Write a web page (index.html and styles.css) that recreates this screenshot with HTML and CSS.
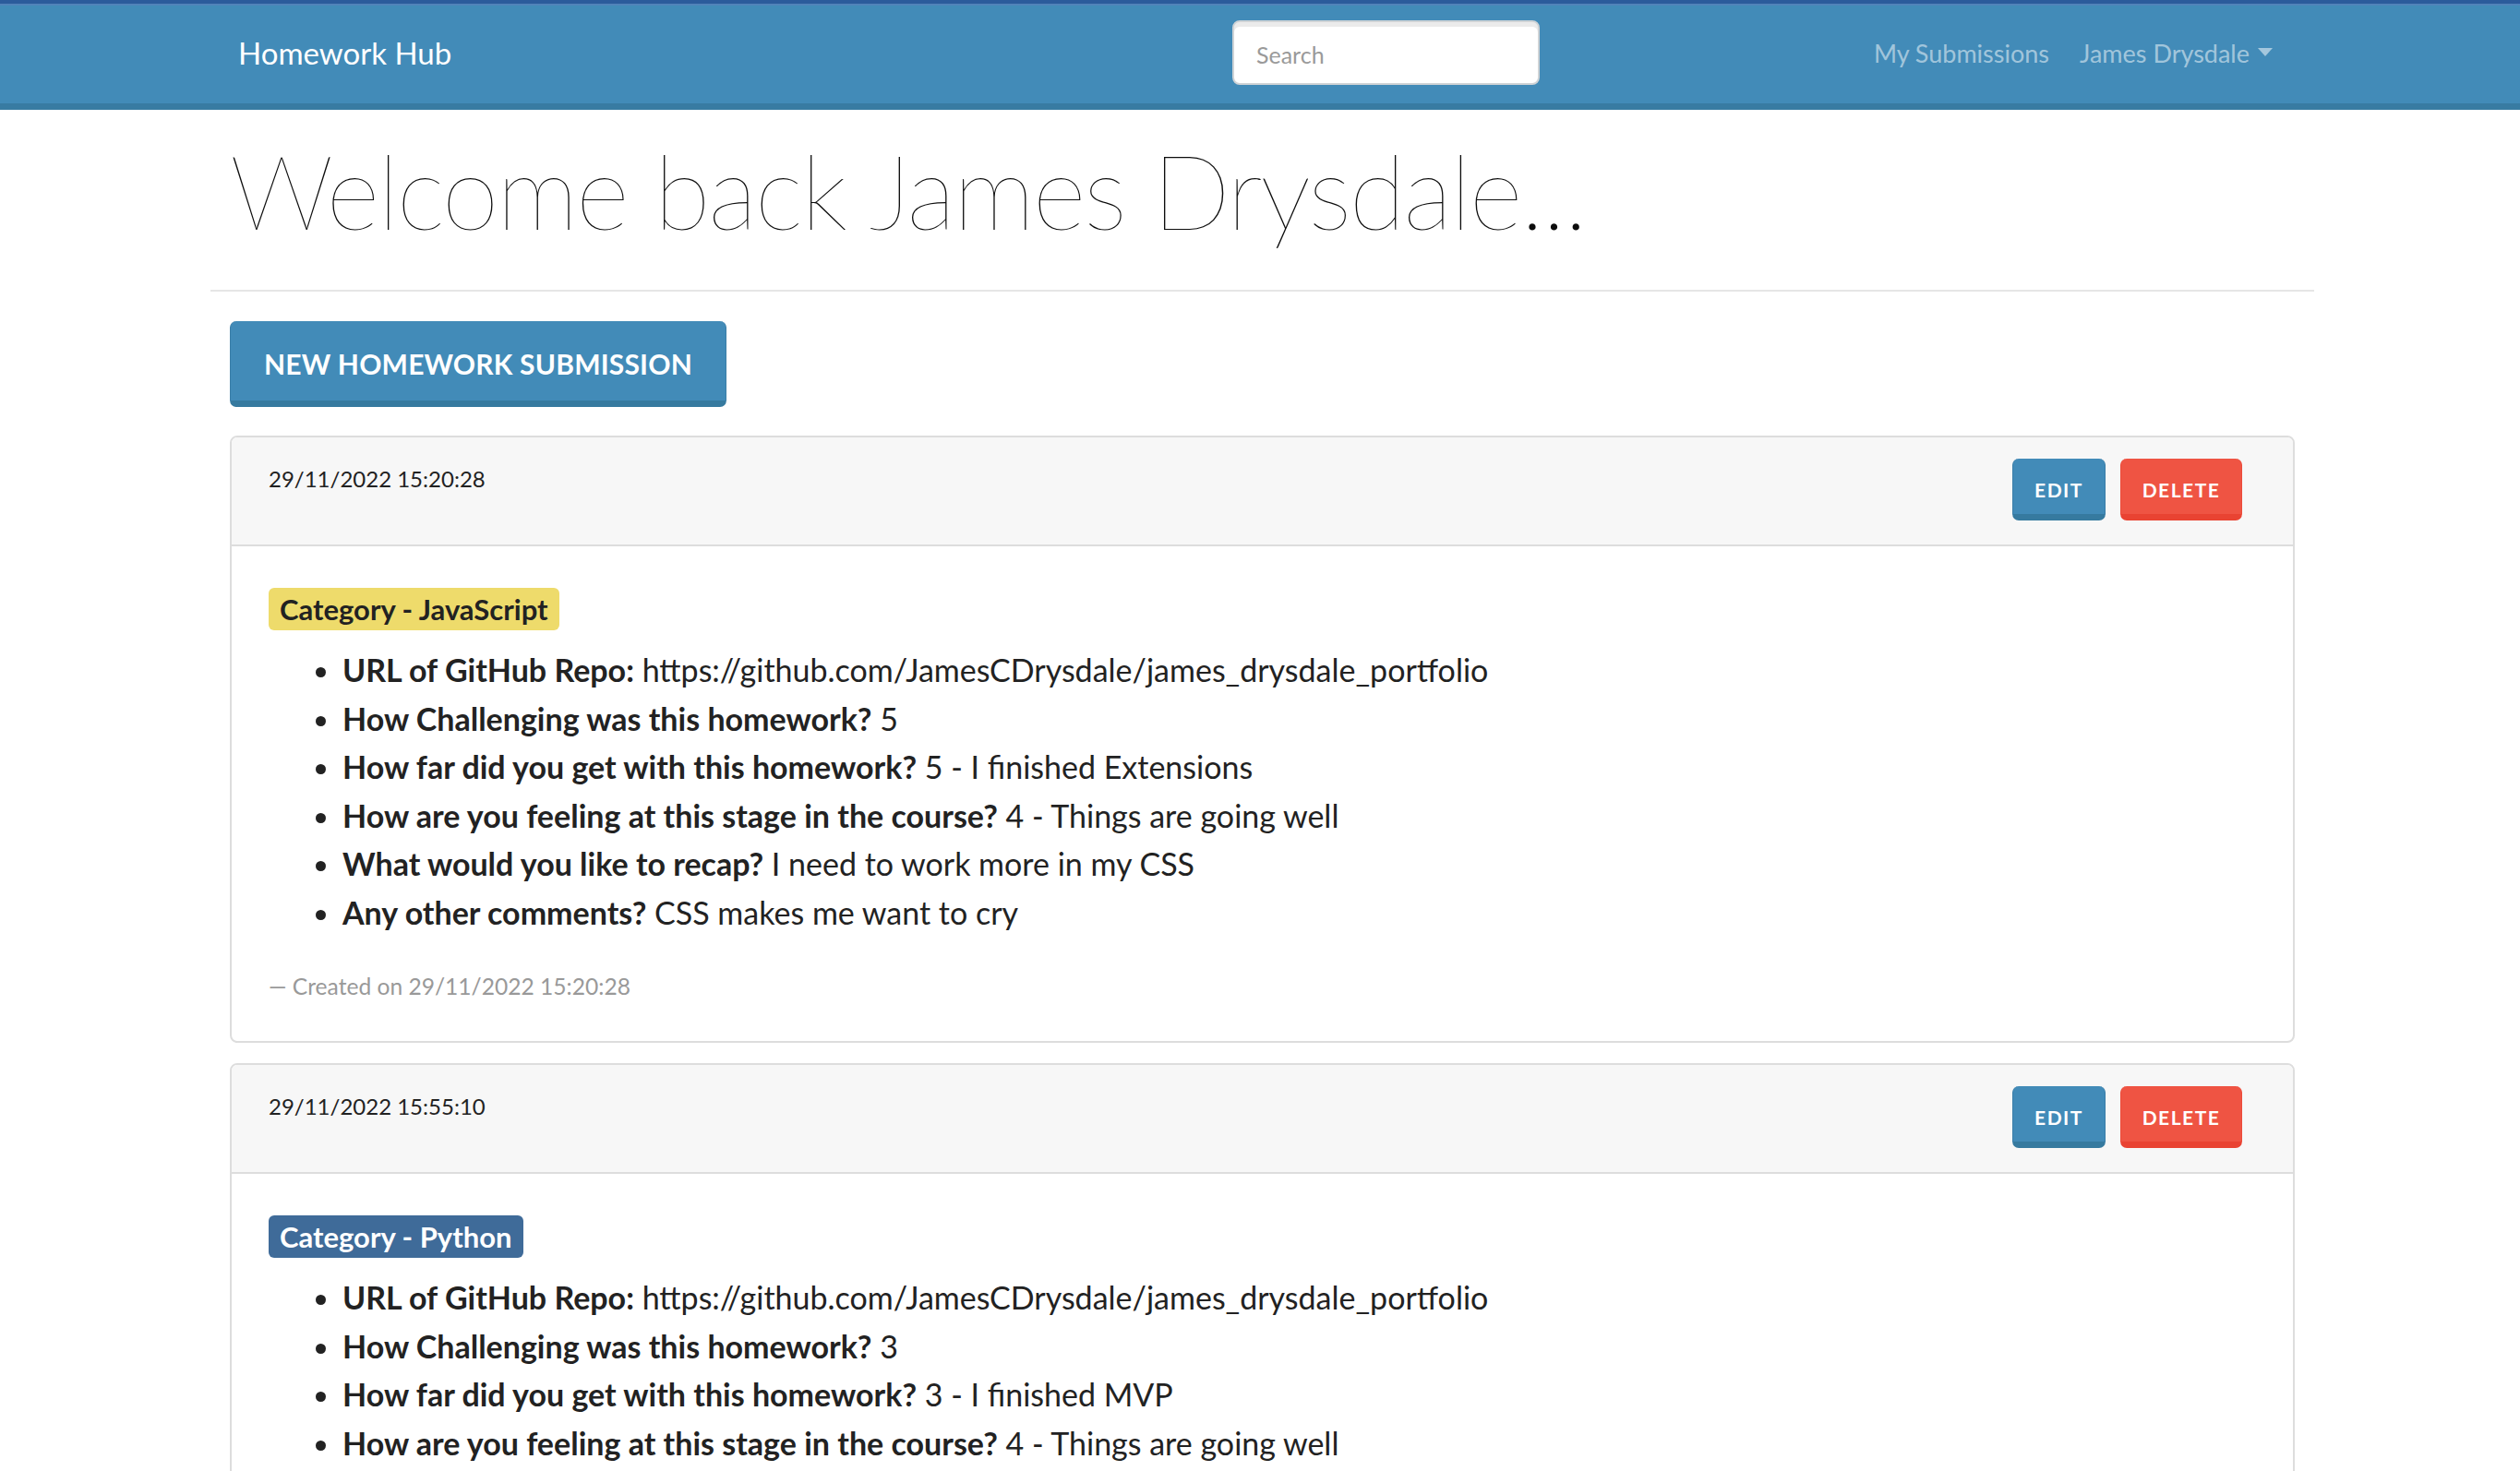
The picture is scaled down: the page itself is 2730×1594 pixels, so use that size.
FILE: index.html
```html
<!DOCTYPE html>
<html lang="en">
<head>
<meta charset="utf-8">
<title>Homework Hub</title>
<link rel="stylesheet" href="styles.css">
</head>
<body>
<nav class="navbar">
  <div class="navbar-inner">
    <a class="brand" href="#">Homework Hub</a>
    <input class="search" type="text" placeholder="Search">
    <div class="nav-links">
      <a class="nav-link" href="#">My Submissions</a>
      <a class="nav-link dropdown" href="#">James Drysdale<span class="caret"></span></a>
    </div>
  </div>
</nav>
<main class="container">
  <h1 class="welcome">Welcome back James Drysdale...</h1>
  <hr class="divider">
  <div class="actions">
    <a class="btn btn-primary btn-lg" href="#">New Homework Submission</a>
  </div>

  <section class="card">
    <header class="card-header">
      <span class="card-date">29/11/2022 15:20:28</span>
      <div class="card-buttons">
        <a class="btn btn-primary btn-sm" href="#">Edit</a>
        <a class="btn btn-danger btn-sm" href="#">Delete</a>
      </div>
    </header>
    <div class="card-body">
      <div class="badge-row"><span class="badge badge-yellow">Category - JavaScript</span></div>
      <ul class="answers">
        <li><b>URL of GitHub Repo:</b> https://github.com/JamesCDrysdale/james_drysdale_portfolio</li>
        <li><b>How Challenging was this homework?</b> 5</li>
        <li><b>How far did you get with this homework?</b> 5 - I finished Extensions</li>
        <li><b>How are you feeling at this stage in the course?</b> 4 - Things are going well</li>
        <li><b>What would you like to recap?</b> I need to work more in my CSS</li>
        <li><b>Any other comments?</b> CSS makes me want to cry</li>
      </ul>
      <footer class="created">— Created on 29/11/2022 15:20:28</footer>
    </div>
  </section>

  <section class="card">
    <header class="card-header">
      <span class="card-date">29/11/2022 15:55:10</span>
      <div class="card-buttons">
        <a class="btn btn-primary btn-sm" href="#">Edit</a>
        <a class="btn btn-danger btn-sm" href="#">Delete</a>
      </div>
    </header>
    <div class="card-body">
      <div class="badge-row"><span class="badge badge-blue">Category - Python</span></div>
      <ul class="answers">
        <li><b>URL of GitHub Repo:</b> https://github.com/JamesCDrysdale/james_drysdale_portfolio</li>
        <li><b>How Challenging was this homework?</b> 3</li>
        <li><b>How far did you get with this homework?</b> 3 - I finished MVP</li>
        <li><b>How are you feeling at this stage in the course?</b> 4 - Things are going well</li>
        <li><b>What would you like to recap?</b> I need to work more in my CSS</li>
        <li><b>Any other comments?</b> CSS makes me want to cry</li>
      </ul>
      <footer class="created">— Created on 29/11/2022 15:55:10</footer>
    </div>
  </section>
</main>
</body>
</html>
```

FILE: styles.css
```css
* { box-sizing: border-box; }

html, body {
  margin: 0;
  padding: 0;
  background: #ffffff;
}

body {
  font-family: "Lato", "Noto Sans", sans-serif;
  color: #222222;
  font-size: 32px;
  line-height: 1.5;
}

a { text-decoration: none; }

/* ---------- navbar ---------- */
.navbar {
  height: 119px;
  background: #428bb8;
  border-top: 4px solid #2b5b9b;
  box-shadow: inset 0 2px 0 #5183b9;
  border-bottom: 7px solid #387ba2;
}

.navbar-inner {
  height: 108px;
  display: flex;
  align-items: center;
  padding: 0 268px 0 258px;
}

.brand {
  width: 320px;
  color: #ffffff;
  font-size: 33px;
  font-weight: 400;
}

.search {
  margin-left: 757px;
  width: 333px;
  height: 70px;
  margin-top: -2px;
  border: 2px solid #cfd3d6;
  border-radius: 8px;
  background: #ffffff;
  box-shadow: inset 0 5px 0 #ebebeb;
  padding: 4px 24px 0 24px;
  font-family: "Lato", sans-serif;
  font-size: 25px;
  color: #555;
  outline: none;
}

.search::placeholder { color: #9a9a9a; }

.nav-links {
  margin-left: auto;
  display: flex;
  align-items: center;
  gap: 33px;
}

.nav-link {
  color: rgba(255, 255, 255, 0.52);
  font-size: 27px;
}

.dropdown {
  display: inline-flex;
  align-items: center;
}

.caret {
  display: inline-block;
  margin-left: 9px;
  margin-top: -4px;
  width: 0;
  height: 0;
  border-left: 8px solid transparent;
  border-right: 8px solid transparent;
  border-top: 9px solid rgba(255, 255, 255, 0.52);
}

/* ---------- page ---------- */
.container {
  width: 2279px;
  margin-left: 228px;
  padding: 0 21px 40px 21px;
}

.welcome {
  margin: 0;
  padding-top: 20px;
  font-family: "Lato", sans-serif;
  font-weight: 100;
  font-size: 112px;
  line-height: 1.2;
  color: #0d0d0d;
  letter-spacing: -2.4px;
}

.divider {
  margin: 41px -21px 0 -21px;
  border: 0;
  border-top: 2px solid #e6e6e6;
  height: 0;
}

.actions {
  padding-top: 32px;
  padding-bottom: 31px;
}

/* ---------- buttons ---------- */
.btn {
  display: inline-flex;
  align-items: center;
  justify-content: center;
  color: #ffffff;
  font-weight: 700;
  text-transform: uppercase;
  border-style: solid;
  border-width: 0 1px 7px 1px;
  border-radius: 7px;
}

.btn-primary {
  background: #428bb8;
  border-color: #3a7ea8 #3a7ea8 #367a9f #3a7ea8;
}

.btn-danger {
  background: #ef5443;
  border-color: #ec4b3a #ec4b3a #e94332 #ec4b3a;
}

.btn-lg {
  width: 538px;
  height: 93px;
  font-size: 30px;
  letter-spacing: 0.2px;
  padding-top: 6px;
}

.btn-sm {
  height: 67px;
  font-size: 21px;
  letter-spacing: 1.5px;
  padding-top: 6px;
}

.card-buttons .btn-primary { width: 101px; }
.card-buttons .btn-danger { width: 132px; }

/* ---------- cards ---------- */
.card {
  border: 2px solid #dddddd;
  border-radius: 8px;
  margin-bottom: 22px;
  overflow: hidden;
}

.card-header {
  display: flex;
  justify-content: space-between;
  align-items: flex-start;
  background: #f7f7f7;
  border-bottom: 2px solid #dddddd;
  padding: 23px 55px 24px 40px;
  height: 118px;
}

.card-date {
  font-size: 24px;
  line-height: 40px;
  padding-top: 2px;
  color: #222222;
}

.card-buttons {
  display: flex;
  gap: 16px;
}

.card-body {
  padding: 45px 40px 38px 40px;
}

.badge-row {
  line-height: 1;
}

.badge {
  display: inline-block;
  height: 46px;
  line-height: 46px;
  padding: 0 12px;
  border-radius: 6px;
  font-weight: 700;
  font-size: 31px;
}

.badge-yellow {
  background: #eedb6b;
  color: #222222;
}

.badge-blue {
  background: #3f6b99;
  color: #ffffff;
}

.answers {
  margin: 17px 0 33px 0;
  padding-left: 80px;
  font-size: 34px;
  line-height: 52.5px;
}

.answers li b { font-weight: 700; }

.created {
  font-size: 24.6px;
  line-height: 42px;
  color: #999999;
}
```
